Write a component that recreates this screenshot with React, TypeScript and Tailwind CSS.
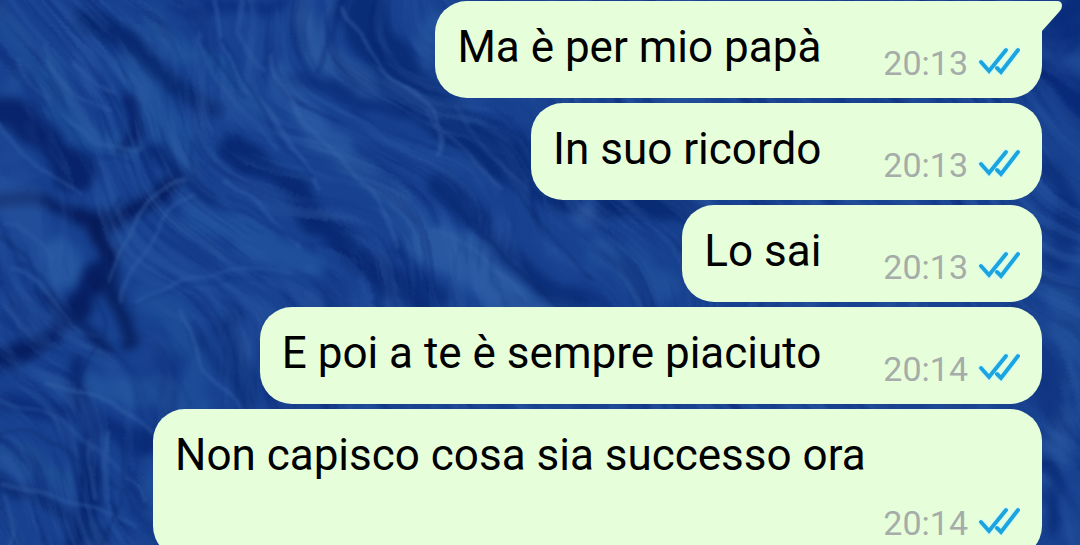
interface Message {
  id: number;
  text: string;
  time: string;
  tail?: boolean;
  wrapped?: boolean;
}

const messages: Message[] = [
  { id: 1, text: 'Ma è per mio papà', time: '20:13', tail: true },
  { id: 2, text: 'In suo ricordo', time: '20:13' },
  { id: 3, text: 'Lo sai', time: '20:13' },
  { id: 4, text: 'E poi a te è sempre piaciuto', time: '20:14' },
  { id: 5, text: 'Non capisco cosa sia successo ora', time: '20:14', wrapped: true },
];

// Broad soft shapes: [path, color, stroke width]
const washes: [string, string, number][] = [
  ['M5 20 Q35 60 10 100', '#1f4d96', 20],
  ['M50 70 Q60 130 130 150', '#20529a', 28],
  ['M130 60 Q160 110 185 170', '#20509a', 38],
  ['M155 20 Q190 50 260 110', '#1f5199', 18],
  ['M280 70 Q310 140 350 160 T440 250', '#2b5aa2', 24],
  ['M300 20 Q320 60 370 90', '#265399', 22],
  ['M430 20 Q410 60 430 100', '#22519b', 20],
  ['M430 240 Q480 270 540 320', '#2c5ca4', 40],
  ['M550 200 Q570 215 600 205', '#2b569d', 16],
  ['M600 250 Q640 260 660 290', '#214f99', 30],
  ['M190 220 Q250 230 310 270', '#21519c', 30],
  ['M60 250 L70 275', '#285aa2', 26],
  ['M95 385 Q150 380 200 410', '#23549d', 30],
  ['M150 300 Q200 330 190 400', '#1e4d97', 34],
  ['M10 450 Q30 460 70 475', '#1d4b92', 20],
  ['M1070 420 L1060 460', '#25519b', 30],
  ['M1060 290 L1075 380', '#214f98', 30],
  ['M85 25 L125 40 L205 105', '#08296f', 22],
  ['M-10 110 Q40 130 80 172', '#061f66', 30],
  ['M-10 200 Q60 205 120 222 Q150 205 172 185', '#041654', 18],
  ['M100 225 L112 262 L95 290', '#03134e', 20],
  ['M122 105 Q146 125 128 152', '#061c60', 12],
  ['M150 150 Q185 175 215 200', '#08276f', 14],
  ['M235 148 Q290 180 325 225 T420 300', '#07256f', 22],
  ['M355 0 Q370 50 440 115 L560 190', '#082a73', 44],
  ['M300 70 Q350 105 420 125', '#0a2d77', 14],
  ['M440 185 Q480 240 575 310', '#0a2c76', 26],
  ['M400 250 Q420 280 440 300', '#0a2d78', 20],
  ['M600 205 Q660 200 700 215', '#07276f', 22],
  ['M185 0 Q230 20 280 0', '#0a2d7b', 16],
  ['M-10 358 Q40 350 70 322 L100 270', '#04195a', 16],
  ['M45 290 Q60 325 110 350', '#061c5c', 10],
  ['M112 275 Q118 315 130 345', '#051c59', 16],
  ['M80 365 Q65 400 80 430 T95 490 L75 550', '#07236c', 16],
  ['M203 330 Q210 370 250 410', '#0a2e76', 10],
  ['M240 320 Q225 350 255 400', '#0a2e76', 14],
  ['M-10 400 Q70 415 150 445', '#0a2a76', 24],
  ['M-10 480 Q50 495 100 540', '#0a2970', 14],
  ['M1090 0 L1040 60 L1090 110', '#082a7a', 40],
  ['M1050 170 Q1080 200 1055 260', '#0b2f7b', 18],
  ['M1044 460 Q1064 490 1050 530', '#0a2e7a', 14],
];

// Thin veins running over the washes
const veins: [string, string][] = [
  ['M345 10 Q360 60 405 85 T440 155', '#426eb2'],
  ['M215 0 Q220 60 260 100 T320 190', '#3c68ae'],
  ['M225 40 Q255 100 285 140 T315 180', '#0b2e79'],
  ['M240 0 Q230 40 265 65', '#335fa7'],
  ['M270 55 Q290 120 330 150 T400 245', '#3c69ae'],
  ['M185 15 Q205 55 245 95', '#0b2e79'],
  ['M200 35 Q195 65 225 90 T280 145', '#305ea7'],
  ['M325 5 Q335 45 320 70', '#0b2e79'],
  ['M0 125 Q25 165 80 195', '#3563a8'],
  ['M20 60 Q45 110 90 135 T140 145', '#3664ab'],
  ['M45 45 Q60 95 110 110', '#3462a9'],
  ['M50 100 Q80 150 130 165', '#0d3480'],
  ['M75 60 Q100 85 115 90', '#3664ab'],
  ['M190 180 Q150 190 130 230 T110 280', '#3b69ad'],
  ['M200 195 Q165 205 145 245 T125 300', '#3563a9'],
  ['M190 145 Q195 175 215 195 T310 245', '#0b2e79'],
  ['M225 180 Q260 205 295 245', '#3866ad'],
  ['M230 195 Q265 220 310 250', '#0f3782'],
  ['M120 200 Q95 240 105 275', '#0c2d70'],
  ['M5 225 Q45 230 50 270', '#3361a8'],
  ['M0 240 Q30 250 35 290', '#0c2d70'],
  ['M10 270 Q50 285 85 330', '#3765aa'],
  ['M20 265 Q60 290 90 335', '#0b2b70'],
  ['M85 280 Q120 310 95 350 T75 410', '#0b2b70'],
  ['M130 310 Q180 270 260 285', '#0f3984'],
  ['M140 300 Q190 265 290 270', '#305da7'],
  ['M185 305 Q190 340 210 370 T240 410', '#3a67ae'],
  ['M160 320 Q175 365 195 405', '#12408c'],
  ['M50 385 Q90 385 150 430', '#3d6aae'],
  ['M0 400 Q50 410 100 450 T150 500', '#2c5aa3'],
  ['M0 430 Q60 435 120 485', '#0c2d70'],
  ['M0 485 Q50 490 140 530', '#3563a8'],
  ['M5 495 Q15 520 8 550', '#3563a8'],
  ['M90 440 Q100 470 95 500', '#3c69ad'],
  ['M105 430 Q112 470 108 500', '#3260a7'],
  ['M120 440 Q135 480 115 520 L100 550', '#0c2d70'],
  ['M455 205 Q500 260 570 310', '#082869'],
  ['M510 190 Q550 235 590 275', '#0a2b70'],
  ['M430 230 Q460 235 530 300', '#3864a8'],
  ['M425 110 Q460 150 500 190', '#375fa6'],
  ['M455 110 Q480 140 525 190', '#2a5199'],
];

function Wallpaper() {
  return (
    <svg
      className="absolute inset-0 h-full w-full"
      viewBox="0 0 1080 545"
      preserveAspectRatio="xMidYMid slice"
      aria-hidden="true"
    >
      <defs>
        <filter id="wash" x="-5%" y="-5%" width="110%" height="110%" colorInterpolationFilters="sRGB">
          <feTurbulence type="fractalNoise" baseFrequency="0.02" numOctaves="3" seed="4" result="noise" />
          <feDisplacementMap in="SourceGraphic" in2="noise" scale="30" xChannelSelector="R" yChannelSelector="G" />
          <feGaussianBlur stdDeviation="5" />
        </filter>
        <filter id="vein" x="-5%" y="-5%" width="110%" height="110%" colorInterpolationFilters="sRGB">
          <feTurbulence type="fractalNoise" baseFrequency="0.018" numOctaves="2" seed="9" result="noise" />
          <feDisplacementMap in="SourceGraphic" in2="noise" scale="20" xChannelSelector="R" yChannelSelector="G" />
          <feGaussianBlur stdDeviation="1.6" />
        </filter>
        <filter id="streak" x="0" y="0" width="100%" height="100%" colorInterpolationFilters="sRGB">
          <feTurbulence type="fractalNoise" baseFrequency="0.009 0.055" numOctaves="4" seed="12" result="grain" />
          <feTurbulence type="fractalNoise" baseFrequency="0.006" numOctaves="1" seed="5" result="bend" />
          <feDisplacementMap in="grain" in2="bend" scale="220" xChannelSelector="R" yChannelSelector="G" />
          <feColorMatrix values="0 0 0 0 0.2  0 0 0 0 0.38  0 0 0 0 0.66  3.4 0 0 0 -1.5" />
        </filter>
        <filter id="shade" x="0" y="0" width="100%" height="100%" colorInterpolationFilters="sRGB">
          <feTurbulence type="fractalNoise" baseFrequency="0.009 0.055" numOctaves="4" seed="31" result="grain" />
          <feTurbulence type="fractalNoise" baseFrequency="0.006" numOctaves="1" seed="5" result="bend" />
          <feDisplacementMap in="grain" in2="bend" scale="220" xChannelSelector="R" yChannelSelector="G" />
          <feColorMatrix values="0 0 0 0 0.02  0 0 0 0 0.13  0 0 0 0 0.42  0 3.4 0 0 -1.6" />
        </filter>
      </defs>
      <rect width="1080" height="545" fill="#184290" />
      <g filter="url(#wash)" fill="none" strokeLinecap="round" opacity="0.85">
        {washes.map(([d, color, width]) => (
          <path key={d} d={d} stroke={color} strokeWidth={width} />
        ))}
      </g>
      <g transform="rotate(54 540 272)">
        <rect x="-200" y="-500" width="1480" height="1540" filter="url(#shade)" opacity="0.4" />
        <rect x="-200" y="-500" width="1480" height="1540" filter="url(#streak)" opacity="0.4" />
      </g>
      <g filter="url(#vein)" fill="none" strokeWidth="4" strokeLinecap="round" opacity="0.38">
        {veins.map(([d, color]) => (
          <path key={d} d={d} stroke={color} />
        ))}
      </g>
    </svg>
  );
}

function ReadTicks() {
  return (
    <svg className="h-8 w-11" viewBox="0 0 44 32" fill="none" role="img" aria-label="Letto">
      <g stroke="#d3fbf5" strokeWidth="7" strokeLinecap="round" opacity="0.7">
        <path d="M5 15 L13 24 L30 3" />
        <path d="M21 21 L25 25 L42 3" />
      </g>
      <g stroke="#1ba5e0" strokeWidth="4" strokeLinecap="round">
        <path d="M5 15 L13 24 L30 3" />
        <path d="M21 21 L25 25 L42 3" />
      </g>
    </svg>
  );
}

function Bubble({ message }: { message: Message }) {
  const { text, time, tail, wrapped } = message;

  return (
    <li
      className={`relative flex rounded-[32px] bg-[#e6ffda] px-[22px] pt-5 pb-[15px] ${
        wrapped ? 'w-full max-w-[889px] flex-col gap-[22px]' : 'items-end justify-between gap-[62px]'
      } ${tail ? 'rounded-tr-none' : ''}`}
    >
      {tail && (
        <svg className="absolute top-0 left-full h-8 w-5" viewBox="0 0 20 32" aria-hidden="true">
          <path d="M-1 0 H15 Q20 0 20 5 Q20 8 17 11 L0 30 H-1 Z" fill="#e6ffda" />
        </svg>
      )}
      <p className={`text-[44px] leading-[52px] text-black ${wrapped ? '' : 'pb-[10px]'}`}>{text}</p>
      <div className="flex items-center gap-2 self-end">
        <time className="text-[34px] leading-10 text-[#a5aca9]">{time}</time>
        <ReadTicks />
      </div>
    </li>
  );
}

export default function App() {
  return (
    <main className="relative h-screen overflow-hidden bg-[#184290] font-['Roboto',sans-serif]">
      <Wallpaper />
      <ul className="relative flex flex-col items-end gap-[5px] pt-px pr-[38px] pl-10">
        {messages.map((message) => (
          <Bubble key={message.id} message={message} />
        ))}
      </ul>
    </main>
  );
}
